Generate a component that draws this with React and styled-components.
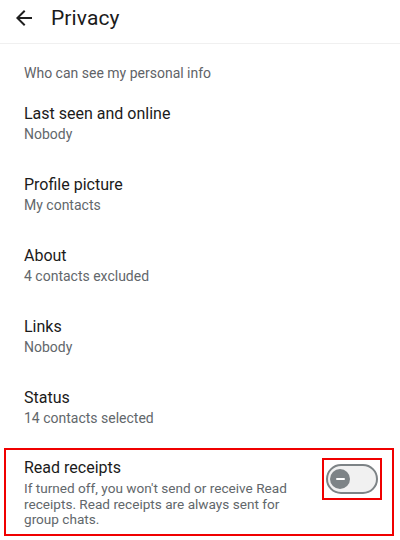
import styled, { createGlobalStyle } from "styled-components";

const GlobalStyle = createGlobalStyle`
  html, body {
    margin: 0;
    padding: 0;
    background: #ffffff;
    font-family: Roboto, "Noto Sans", Arial, sans-serif;
  }
`;

const settings = [
  { title: "Last seen and online", value: "Nobody" },
  { title: "Profile picture", value: "My contacts" },
  { title: "About", value: "4 contacts excluded" },
  { title: "Links", value: "Nobody" },
  { title: "Status", value: "14 contacts selected" },
];

const App = () => {
  return (
    <>
      <GlobalStyle />
      <Screen>
        <TopBar>
          <BackButton aria-label="Back">
            <svg width="24" height="24" viewBox="0 0 24 24">
              <path
                d="M20 11H7.83l5.59-5.59L12 4l-8 8 8 8 1.41-1.41L7.83 13H20v-2z"
                fill="#1f1f1f"
              />
            </svg>
          </BackButton>
          <Title>Privacy</Title>
        </TopBar>

        <SectionHeader>Who can see my personal info</SectionHeader>

        {settings.map((item) => (
          <Row key={item.title}>
            <RowText>
              <RowTitle>{item.title}</RowTitle>
              <RowSub>{item.value}</RowSub>
            </RowText>
          </Row>
        ))}

        <Row $highlighted>
          <RowText>
            <RowTitle>Read receipts</RowTitle>
            <RowDesc>
              If turned off, you won't send or receive Read receipts. Read
              receipts are always sent for group chats.
            </RowDesc>
          </RowText>
          <SwitchFrame>
            <Track>
              <Thumb />
            </Track>
          </SwitchFrame>
        </Row>
      </Screen>
    </>
  );
};

export default App;

const Screen = styled.div`
  width: 400px;
  height: 540px;
  overflow: hidden;
  background: #ffffff;
`;

const TopBar = styled.div`
  display: flex;
  align-items: center;
  height: 36px;
  padding-bottom: 7px;
  border-bottom: 1px solid #f0f0f0;
`;

const BackButton = styled.div`
  display: flex;
  align-items: center;
  justify-content: center;
  width: 24px;
  height: 24px;
  margin-left: 12px;
  margin-right: 15px;
`;

const Title = styled.div`
  font-size: 21px;
  color: #1b1b1b;
  letter-spacing: 0.1px;
`;

const SectionHeader = styled.div`
  padding: 19px 24px 5px;
  font-size: 14px;
  line-height: 20px;
  color: #5f6368;
`;

const Row = styled.div`
  display: flex;
  align-items: flex-start;
  padding: ${(p) => (p.$highlighted ? "7px 10px 6px 18px" : "15px 24px")};
  margin: ${(p) => (p.$highlighted ? "5px 6px 0 4px" : "0")};
  border: ${(p) => (p.$highlighted ? "2px solid #f00000" : "none")};
`;

const RowText = styled.div`
  flex: 1;
  min-width: 0;
  padding-right: 6px;
`;

const RowTitle = styled.div`
  font-size: 16px;
  line-height: 21px;
  color: #1b1b1b;
`;

const RowSub = styled.div`
  font-size: 14px;
  line-height: 20px;
  color: #62676b;
`;

const RowDesc = styled.div`
  margin-top: 3px;
  font-size: 13.6px;
  line-height: 15.5px;
  color: #62676b;
`;

const SwitchFrame = styled.div`
  flex: none;
  margin-top: 1px;
  padding: 4px 2px;
  border: 2px solid #f00000;
`;

const Track = styled.div`
  box-sizing: border-box;
  width: 52px;
  height: 30px;
  border: 2px solid #7d8386;
  border-radius: 15px;
  background: #f1f1f1;
  display: flex;
  align-items: center;
  padding-left: 2px;
`;

const Thumb = styled.div`
  width: 20px;
  height: 20px;
  border-radius: 50%;
  background: #7d8386;
  display: flex;
  align-items: center;
  justify-content: center;

  &::after {
    content: "";
    width: 9px;
    height: 2px;
    border-radius: 1px;
    background: #ffffff;
  }
`;
